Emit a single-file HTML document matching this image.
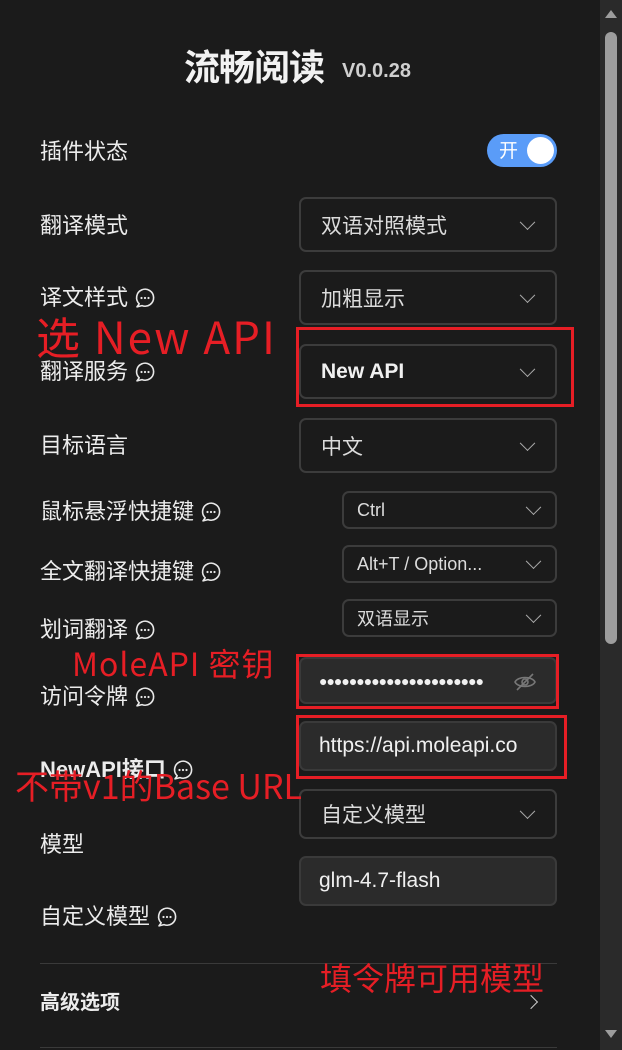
<!DOCTYPE html>
<html><head><meta charset="utf-8"><style>
*{margin:0;padding:0;box-sizing:border-box}
body{width:622px;height:1050px;background:#1b1b1b;position:relative;overflow:hidden;font-family:"Liberation Sans","Noto Sans CJK SC",sans-serif;color:#e8e8e8}
.a{position:absolute;white-space:nowrap}
.lbl{position:absolute;left:40px;font-size:22px;line-height:30px;color:#ececec;display:flex;align-items:center;gap:6px}
.sel{position:absolute;border:2px solid #3c3c3c;border-radius:7px;background:#1b1b1b;color:#dcdcdc;display:flex;align-items:center}
.big{left:299px;width:258px;height:55px;font-size:21px;padding-left:20px}
.sm{left:342px;width:215px;height:38px;font-size:18px;padding-left:13px}
.inp{position:absolute;left:299px;width:258px;height:50px;background:#2b2b2b;border:2px solid #3a3a3a;border-radius:7px;display:flex;align-items:center;padding-left:18px;font-size:21px;color:#f0f0f0;overflow:hidden}
.chev{position:absolute;right:22px;top:50%;width:11px;height:11px;border-right:1.4px solid #aaa;border-bottom:1.4px solid #aaa;transform:translateY(-75%) rotate(45deg)}
.red{position:absolute;color:#e61e25;font-family:"Noto Sans CJK SC",sans-serif;white-space:nowrap}
.box{position:absolute;border:3px solid #e61e25}
</style></head><body>
<div class="a" style="left:600px;top:0;width:22px;height:1050px;background:#2a2a2a"></div>
<div class="a" style="left:605px;top:32px;width:12px;height:612px;background:#9d9d9d;border-radius:6px"></div>
<div class="a" style="left:605px;top:10px;width:0;height:0;border-left:6px solid transparent;border-right:6px solid transparent;border-bottom:8px solid #9d9d9d"></div>
<div class="a" style="left:605px;top:1030px;width:0;height:0;border-left:6px solid transparent;border-right:6px solid transparent;border-top:8px solid #9d9d9d"></div>

<div class="a" style="left:184px;top:44px;font-size:36px;line-height:48px;font-weight:bold;color:#f2f2f2;letter-spacing:-1px">流畅阅读</div>
<div class="a" style="left:342px;top:60px;font-size:20px;font-weight:bold;color:#cfcfcf">V0.0.28</div>

<div class="lbl" style="top:137px">插件状态</div>
<div class="a" style="left:487px;top:134px;width:70px;height:33px;background:#5a9cf8;border-radius:17px">
<span style="position:absolute;left:12px;top:4px;font-size:19px;color:#fff;font-family:'Noto Sans CJK SC',sans-serif;line-height:24px">开</span>
<span style="position:absolute;right:3px;top:3px;width:27px;height:27px;border-radius:50%;background:#fff"></span></div>

<div class="lbl" style="top:211px">翻译模式</div>
<div class="sel big" style="top:197px">双语对照模式<i class="chev"></i></div>
<div class="lbl" style="top:283px">译文样式<svg width="22" height="22" viewBox="0 0 22 22"><path d="M5.2 16.8A8.5 8.5 0 1 1 8 18.6L3 19.8Z" fill="none" stroke="#e8e8e8" stroke-width="1.6" stroke-linejoin="round"/><circle cx="7.5" cy="11" r="1.1" fill="#e8e8e8"/><circle cx="11" cy="11" r="1.1" fill="#e8e8e8"/><circle cx="14.5" cy="11" r="1.1" fill="#e8e8e8"/></svg></div>
<div class="sel big" style="top:270px">加粗显示<i class="chev"></i></div>
<div class="lbl" style="top:357px">翻译服务<svg width="22" height="22" viewBox="0 0 22 22"><path d="M5.2 16.8A8.5 8.5 0 1 1 8 18.6L3 19.8Z" fill="none" stroke="#e8e8e8" stroke-width="1.6" stroke-linejoin="round"/><circle cx="7.5" cy="11" r="1.1" fill="#e8e8e8"/><circle cx="11" cy="11" r="1.1" fill="#e8e8e8"/><circle cx="14.5" cy="11" r="1.1" fill="#e8e8e8"/></svg></div>
<div class="sel big" style="top:344px;font-weight:bold;color:#f0f0f0">New API<i class="chev"></i></div>
<div class="lbl" style="top:431px">目标语言</div>
<div class="sel big" style="top:418px">中文<i class="chev"></i></div>
<div class="lbl" style="top:497px">鼠标悬浮快捷键<svg width="22" height="22" viewBox="0 0 22 22"><path d="M5.2 16.8A8.5 8.5 0 1 1 8 18.6L3 19.8Z" fill="none" stroke="#e8e8e8" stroke-width="1.6" stroke-linejoin="round"/><circle cx="7.5" cy="11" r="1.1" fill="#e8e8e8"/><circle cx="11" cy="11" r="1.1" fill="#e8e8e8"/><circle cx="14.5" cy="11" r="1.1" fill="#e8e8e8"/></svg></div>
<div class="sel sm" style="top:491px">Ctrl<i class="chev" style="right:16px"></i></div>
<div class="lbl" style="top:557px">全文翻译快捷键<svg width="22" height="22" viewBox="0 0 22 22"><path d="M5.2 16.8A8.5 8.5 0 1 1 8 18.6L3 19.8Z" fill="none" stroke="#e8e8e8" stroke-width="1.6" stroke-linejoin="round"/><circle cx="7.5" cy="11" r="1.1" fill="#e8e8e8"/><circle cx="11" cy="11" r="1.1" fill="#e8e8e8"/><circle cx="14.5" cy="11" r="1.1" fill="#e8e8e8"/></svg></div>
<div class="sel sm" style="top:545px">Alt+T / Option...<i class="chev" style="right:16px"></i></div>
<div class="lbl" style="top:615px">划词翻译<svg width="22" height="22" viewBox="0 0 22 22"><path d="M5.2 16.8A8.5 8.5 0 1 1 8 18.6L3 19.8Z" fill="none" stroke="#e8e8e8" stroke-width="1.6" stroke-linejoin="round"/><circle cx="7.5" cy="11" r="1.1" fill="#e8e8e8"/><circle cx="11" cy="11" r="1.1" fill="#e8e8e8"/><circle cx="14.5" cy="11" r="1.1" fill="#e8e8e8"/></svg></div>
<div class="sel sm" style="top:599px">双语显示<i class="chev" style="right:16px"></i></div>
<div class="lbl" style="top:682px">访问令牌<svg width="22" height="22" viewBox="0 0 22 22"><path d="M5.2 16.8A8.5 8.5 0 1 1 8 18.6L3 19.8Z" fill="none" stroke="#e8e8e8" stroke-width="1.6" stroke-linejoin="round"/><circle cx="7.5" cy="11" r="1.1" fill="#e8e8e8"/><circle cx="11" cy="11" r="1.1" fill="#e8e8e8"/><circle cx="14.5" cy="11" r="1.1" fill="#e8e8e8"/></svg></div>
<div class="inp" style="top:657px;height:47px;font-size:14px;letter-spacing:-1px">●●●●●●●●●●●●●●●●●●●●●●
<svg style="position:absolute;right:18px;top:13px" width="24" height="20" viewBox="0 0 24 20"><path d="M2 10C5 4 19 4 22 10C19 16 5 16 2 10Z" fill="none" stroke="#777" stroke-width="1.6"/><circle cx="12" cy="10" r="3" fill="none" stroke="#777" stroke-width="1.6"/><path d="M4 18L20 2" stroke="#777" stroke-width="1.6"/></svg></div>
<div class="lbl" style="top:755px;font-weight:bold">NewAPI接口<svg width="22" height="22" viewBox="0 0 22 22"><path d="M5.2 16.8A8.5 8.5 0 1 1 8 18.6L3 19.8Z" fill="none" stroke="#e8e8e8" stroke-width="1.6" stroke-linejoin="round"/><circle cx="7.5" cy="11" r="1.1" fill="#e8e8e8"/><circle cx="11" cy="11" r="1.1" fill="#e8e8e8"/><circle cx="14.5" cy="11" r="1.1" fill="#e8e8e8"/></svg></div>
<div class="inp" style="top:721px">https://api.moleapi.co</div>
<div class="lbl" style="top:830px">模型</div>
<div class="sel big" style="top:789px;height:50px">自定义模型<i class="chev"></i></div>
<div class="lbl" style="top:902px">自定义模型<svg width="22" height="22" viewBox="0 0 22 22"><path d="M5.2 16.8A8.5 8.5 0 1 1 8 18.6L3 19.8Z" fill="none" stroke="#e8e8e8" stroke-width="1.6" stroke-linejoin="round"/><circle cx="7.5" cy="11" r="1.1" fill="#e8e8e8"/><circle cx="11" cy="11" r="1.1" fill="#e8e8e8"/><circle cx="14.5" cy="11" r="1.1" fill="#e8e8e8"/></svg></div>
<div class="inp" style="top:856px">glm-4.7-flash</div>
<div class="a" style="left:40px;top:963px;width:517px;height:1px;background:#3a3a3a"></div>
<div class="lbl" style="top:988px;font-size:20px;font-weight:bold">高级选项</div>
<div class="a" style="left:526px;top:997px;width:10px;height:10px;border-right:1.6px solid #ccc;border-top:1.6px solid #ccc;transform:rotate(45deg)"></div>
<div class="a" style="left:40px;top:1047px;width:517px;height:1px;background:#3a3a3a"></div>

<div class="box" style="left:296px;top:327px;width:278px;height:80px"></div>
<div class="box" style="left:296px;top:654px;width:263px;height:55px"></div>
<div class="box" style="left:296px;top:715px;width:271px;height:64px"></div>
<div class="red" style="left:36px;top:304px;font-size:44px;line-height:62px;letter-spacing:2px">选 New API</div>
<div class="red" style="left:72px;top:640px;font-size:32px;line-height:46px;letter-spacing:1px">MoleAPI 密钥</div>
<div class="red" style="left:15px;top:761px;font-size:34px;line-height:48px;letter-spacing:0px">不带v1的Base URL</div>
<div class="red" style="left:320px;top:954px;font-size:32px;line-height:46px">填令牌可用模型</div>
</body></html>
